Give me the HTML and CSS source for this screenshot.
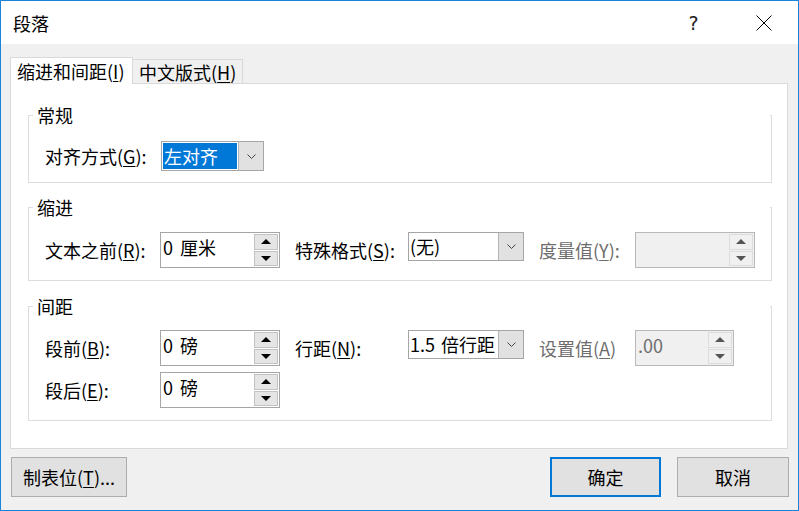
FILE: index.html
```html
<!DOCTYPE html>
<html lang="zh-CN">
<head>
    <meta charset="UTF-8">
    <title>段落</title>
    <link rel="stylesheet" href="styles.css">
</head>
<body>
    <div class="window">
        <div class="titlebar">
            <div class="title">段落</div>
            <div class="caption-btn help">?</div>
            <div class="caption-btn close">
                <svg width="16" height="16" viewBox="0 0 16 16" fill="none" stroke="#000" stroke-width="1">
                    <line x1="0.5" y1="0.5" x2="15.5" y2="15.5"></line>
                    <line x1="15.5" y1="0.5" x2="0.5" y2="15.5"></line>
                </svg>
            </div>
        </div>

        <div class="content">
            <div class="tabs">
                <div class="tab active">缩进和间距(<u>I</u>)</div>
                <div class="tab">中文版式(<u>H</u>)</div>
            </div>

            <div class="panel">
                <div class="group">
                    <div class="group-title">常规</div>
                    <div class="row row-short">
                        <span class="lbl lbl-align">对齐方式(<u>G</u>):</span>
                        <div class="combo combo-align">
                            <span class="combo-value selected">左对齐</span>
                            <span class="combo-btn">
                                <svg width="9" height="5" viewBox="0 0 9 5" fill="none" stroke="#444" stroke-width="1"><polyline points="0.5,0.5 4.5,4.5 8.5,0.5"></polyline></svg>
                            </span>
                        </div>
                    </div>
                </div>

                <div class="group">
                    <div class="group-title">缩进</div>
                    <div class="row">
                        <span class="lbl lbl-first">文本之前(<u>R</u>):</span>
                        <div class="spin">
                            <span class="spin-value">0 厘米</span>
                            <span class="spin-buttons">
                                <span class="spin-btn"><i class="arrow-up"></i></span>
                                <span class="spin-btn"><i class="arrow-down"></i></span>
                            </span>
                        </div>
                        <span class="lbl lbl-mid">特殊格式(<u>S</u>):</span>
                        <div class="combo combo-wide">
                            <span class="combo-value">(无)</span>
                            <span class="combo-btn">
                                <svg width="9" height="5" viewBox="0 0 9 5" fill="none" stroke="#444" stroke-width="1"><polyline points="0.5,0.5 4.5,4.5 8.5,0.5"></polyline></svg>
                            </span>
                        </div>
                        <span class="lbl lbl-last disabled">度量值(<u>Y</u>):</span>
                        <div class="spin disabled">
                            <span class="spin-value"></span>
                            <span class="spin-buttons">
                                <span class="spin-btn"><i class="arrow-up"></i></span>
                                <span class="spin-btn"><i class="arrow-down"></i></span>
                            </span>
                        </div>
                    </div>
                </div>

                <div class="group group-spacing">
                    <div class="group-title">间距</div>
                    <div class="row">
                        <span class="lbl lbl-first">段前(<u>B</u>):</span>
                        <div class="spin">
                            <span class="spin-value">0 磅</span>
                            <span class="spin-buttons">
                                <span class="spin-btn"><i class="arrow-up"></i></span>
                                <span class="spin-btn"><i class="arrow-down"></i></span>
                            </span>
                        </div>
                        <span class="lbl lbl-mid">行距(<u>N</u>):</span>
                        <div class="combo combo-wide">
                            <span class="combo-value">1.5 倍行距</span>
                            <span class="combo-btn">
                                <svg width="9" height="5" viewBox="0 0 9 5" fill="none" stroke="#444" stroke-width="1"><polyline points="0.5,0.5 4.5,4.5 8.5,0.5"></polyline></svg>
                            </span>
                        </div>
                        <span class="lbl lbl-last disabled">设置值(<u>A</u>)</span>
                        <div class="spin spin-narrow disabled">
                            <span class="spin-value">.00</span>
                            <span class="spin-buttons">
                                <span class="spin-btn"><i class="arrow-up"></i></span>
                                <span class="spin-btn"><i class="arrow-down"></i></span>
                            </span>
                        </div>
                    </div>
                    <div class="row row-next">
                        <span class="lbl lbl-first">段后(<u>E</u>):</span>
                        <div class="spin">
                            <span class="spin-value">0 磅</span>
                            <span class="spin-buttons">
                                <span class="spin-btn"><i class="arrow-up"></i></span>
                                <span class="spin-btn"><i class="arrow-down"></i></span>
                            </span>
                        </div>
                    </div>
                </div>
            </div>

            <div class="footer">
                <div class="btn btn-tabs">制表位(<u>T</u>)...</div>
                <div class="btn btn-ok">确定</div>
                <div class="btn btn-cancel">取消</div>
            </div>
        </div>
    </div>
</body>
</html>
```

FILE: styles.css
```css
* {
    box-sizing: border-box;
}
body {
    margin: 0;
    font-family: "Noto Sans CJK SC", "Noto Sans", sans-serif;
    font-size: 18px;
    color: #000;
    background: #fff;
}
u {
    text-decoration-thickness: 1px;
    text-underline-offset: 2px;
}
.window {
    width: 799px;
    height: 511px;
    border: 1px solid #1883d7;
    display: flex;
    flex-direction: column;
    background: #f0f0f0;
}
/* title bar */
.titlebar {
    height: 43px;
    display: flex;
    align-items: center;
    background: #fff;
    flex-shrink: 0;
}
.title {
    flex: 1;
    padding-left: 12px;
    line-height: 24px;
}
.caption-btn {
    width: 69px;
    height: 43px;
    display: flex;
    align-items: center;
    justify-content: center;
}
.help {
    font-family: "DejaVu Sans", sans-serif;
    font-size: 19px;
    color: #222;
    padding-right: 2px;
}
.close {
    padding-top: 1px;
}
/* tabs */
.content {
    flex: 1;
    display: flex;
    flex-direction: column;
    padding-top: 13px;
}
.tabs {
    display: flex;
    align-items: flex-end;
    margin-left: 9px;
    height: 27px;
    margin-bottom: -1px;
    position: relative;
    z-index: 1;
}
.tab {
    height: 24px;
    padding: 1px 0 0 6px;
    line-height: 22px;
    border: 1px solid #d9d9d9;
    border-bottom: none;
    background: #f0f0f0;
    width: 110px;
    margin-bottom: 1px;
    white-space: nowrap;
}
.tab.active {
    height: 27px;
    width: 123px;
    background: #fff;
    padding: 1px 0 0 6px;
    line-height: 24px;
    margin-bottom: 0;
}
.tab.active + .tab {
    border-left: none;
}
.panel {
    margin: 0 10px 0 9px;
    border: 1px solid #d9d9d9;
    background: #fff;
    padding: 31px 15px 27px 17px;
}
/* group boxes */
.group {
    position: relative;
    border: 1px solid #dcdcdc;
    border-top-color: transparent;
    padding: 0 15px 11px 16px;
}
.group::before,
.group::after {
    content: "";
    position: absolute;
    top: -1px;
    height: 1px;
    background: #dcdcdc;
}
.group::before {
    left: -1px;
    width: 5px;
}
.group::after {
    right: -1px;
    width: 2px;
}
.group + .group {
    margin-top: 24px;
    padding-bottom: 12px;
}
.group.group-spacing {
    margin-top: 25px;
}
.group-title {
    margin: -13px 0 0 -8px;
    line-height: 24px;
}
.row {
    display: flex;
    align-items: center;
    height: 36px;
    margin-top: 13px;
}
.row-short {
    height: 30px;
    margin-top: 14px;
}
.group-spacing .row {
    margin-top: 12px;
}
.group-spacing .row-next {
    margin-top: 6px;
}
.lbl {
    line-height: 24px;
    white-space: nowrap;
    padding-bottom: 1px;
}
.lbl.disabled {
    color: #6d6d6d;
}
.lbl-align {
    width: 116px;
}
.lbl-first {
    width: 115px;
}
.lbl-mid {
    width: 113px;
    margin-left: 15px;
}
.lbl-last {
    width: 96px;
    margin-left: 15px;
}
/* combo boxes */
.combo {
    display: flex;
    height: 29px;
    border: 1px solid #a6a6a6;
    background: #fff;
    align-self: flex-start;
}
.combo-align {
    width: 103px;
    height: 30px;
    align-self: center;
}
.combo-wide {
    width: 116px;
}
.combo-value {
    flex: 1;
    line-height: 26px;
    padding-left: 1px;
    white-space: nowrap;
    overflow: hidden;
    word-spacing: 2px;
}
.combo-value.selected {
    margin: 1px;
    background: #0078d7;
    color: #fff;
    padding-left: 1px;
}
.combo-btn {
    width: 25px;
    background: #e1e1e1;
    border-left: 1px solid #b4b4b4;
    display: flex;
    align-items: center;
    justify-content: center;
}
/* spin boxes */
.spin {
    display: flex;
    width: 120px;
    height: 36px;
    border: 1px solid #a6a6a6;
    background: #fff;
}
.spin-narrow {
    width: 99px;
}
.spin-value {
    flex: 1;
    line-height: 28px;
    padding-left: 2px;
    white-space: nowrap;
    word-spacing: 3px;
}
.spin-buttons {
    width: 25px;
    display: flex;
    flex-direction: column;
    gap: 1px;
    padding: 1px 1px 1px 0;
}
.spin-btn {
    flex: 1;
    background: #e5e5e5;
    border: 1px solid #c2c2c2;
    display: flex;
    align-items: center;
    justify-content: center;
}
.arrow-up,
.arrow-down {
    width: 0;
    height: 0;
    border-left: 5px solid transparent;
    border-right: 5px solid transparent;
}
.arrow-up {
    border-bottom: 5px solid #000;
}
.arrow-down {
    border-top: 5px solid #000;
}
.spin.disabled {
    background: #f0f0f0;
    border-color: #b8b8b8;
}
.spin.disabled .spin-value {
    color: #6d6d6d;
}
.spin.disabled .spin-btn {
    background: #f0f0f0;
    border-color: #dcdcdc;
}
.spin.disabled .arrow-up {
    border-bottom-color: #555;
}
.spin.disabled .arrow-down {
    border-top-color: #555;
}
/* bottom buttons */
.footer {
    display: flex;
    margin-top: 8px;
    padding: 0 9px 0 10px;
}
.btn {
    height: 40px;
    background: #e1e1e1;
    border: 1px solid #adadad;
    display: flex;
    align-items: center;
    justify-content: center;
    line-height: 24px;
}
.btn-tabs {
    width: 116px;
    margin-right: auto;
}
.btn-ok {
    width: 111px;
    border: 2px solid #0078d7;
}
.btn-cancel {
    width: 112px;
    margin-left: 16px;
}
```
